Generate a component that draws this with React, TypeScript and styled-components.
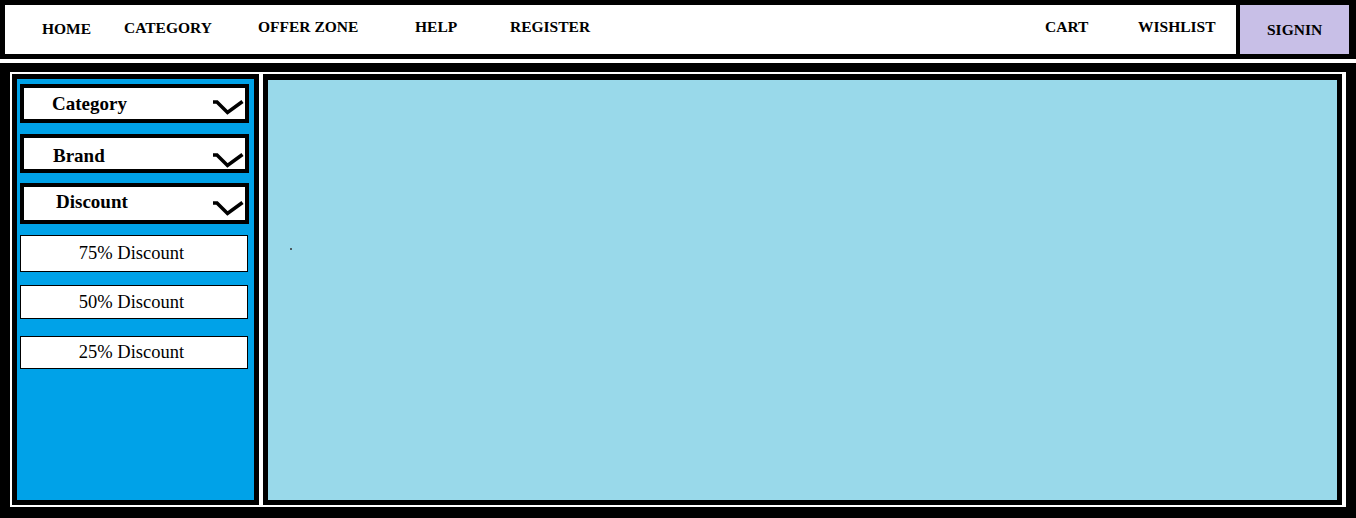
import React from "react";
import styled, { createGlobalStyle } from "styled-components";

const Global = createGlobalStyle`
  html, body { margin: 0; padding: 0; background: #ffffff; }
  body { font-family: "Liberation Serif", "Times New Roman", serif; color: #000; }
`;

const Page = styled.div`
  width: 1356px;
  height: 518px;
  display: flex;
  flex-direction: column;
  gap: 4px;
  overflow: hidden;
`;

const NavBar = styled.nav`
  box-sizing: border-box;
  height: 59px;
  border-style: solid;
  border-color: #000;
  border-width: 5px 7px 5px 5px;
  background: #fff;
  display: flex;
  align-items: stretch;
  padding-left: 37px;
`;

const NavItem = styled.a<{ $w?: number; $top: number; $grow?: boolean }>`
  box-sizing: border-box;
  ${(p) => (p.$grow ? "flex: 1;" : `width: ${p.$w}px; flex: none;`)}
  padding-top: ${(p) => p.$top}px;
  font-family: "Liberation Serif", "Times New Roman", serif;
  font-weight: bold;
  font-size: 15.5px;
  color: #000;
  text-decoration: none;
  white-space: nowrap;
`;

const SignIn = styled.a`
  box-sizing: border-box;
  width: 113px;
  flex: none;
  border-left: 4px solid #000;
  background: #c8bfe7;
  padding: 16px 0 0 27px;
  font-family: "Liberation Serif", "Times New Roman", serif;
  font-weight: bold;
  font-size: 15.5px;
  color: #000;
  text-decoration: none;
`;

const Main = styled.main`
  box-sizing: border-box;
  flex: 1;
  display: flex;
  gap: 4px;
  background: #fff;
  border-style: solid;
  border-color: #000;
  border-width: 9px 10px 11px 10px;
  padding: 2px 4px 2px 2px;
`;

const Sidebar = styled.aside`
  box-sizing: border-box;
  width: 247px;
  flex: none;
  border: 5px solid #000;
  background: #00a2e8;
  padding: 5px 0 0 3px;
  display: flex;
  flex-direction: column;
`;

const FilterHead = styled.div<{ $h: number; $gap: number }>`
  box-sizing: border-box;
  width: 229px;
  height: ${(p) => p.$h}px;
  margin-bottom: ${(p) => p.$gap}px;
  border: 4px solid #000;
  background: #fff;
  display: flex;
  align-items: flex-start;
  justify-content: space-between;
`;

const FilterLabel = styled.span<{ $indent: number; $top: number }>`
  padding: ${(p) => p.$top}px 0 0 ${(p) => p.$indent}px;
  font-family: "Liberation Serif", "Times New Roman", serif;
  font-weight: bold;
  font-size: 19px;
  line-height: normal;
`;

const Chevron = styled.svg<{ $top: number }>`
  margin: ${(p) => p.$top}px 1px 0 0;
  flex: none;
`;

const DiscountItem = styled.button<{ $h: number; $gap: number }>`
  box-sizing: border-box;
  width: 228px;
  height: ${(p) => p.$h}px;
  margin-bottom: ${(p) => p.$gap}px;
  border: 1px solid #000;
  background: #fff;
  padding: 0 5px 0 0;
  display: flex;
  align-items: center;
  justify-content: center;
  font-family: "Liberation Serif", "Times New Roman", serif;
  font-size: 18.5px;
  color: #000;
`;

const Content = styled.section`
  box-sizing: border-box;
  flex: 1;
  border: 5px solid #000;
  border-top-width: 6px;
  background: #99d9ea;
`;

const Speck = styled.div`
  width: 2px;
  height: 2px;
  margin: 168px 0 0 22px;
  background: #4a5a60;
`;

const ChevronIcon = ({ top }: { top: number }) => (
  <Chevron $top={top} width="32" height="16" viewBox="0 0 32 16">
    <polyline
      points="1,3 5,3 15.5,13.5 30.5,2.5"
      fill="none"
      stroke="#000"
      strokeWidth="3.6"
      strokeLinejoin="miter"
    />
  </Chevron>
);

const filters = [
  { label: "Category", h: 39, gap: 11, indent: 28, top: 5, chev: 11 },
  { label: "Brand", h: 39, gap: 10, indent: 29, top: 7, chev: 14 },
  { label: "Discount", h: 41, gap: 11, indent: 32, top: 4, chev: 13 },
];

const discounts = [
  { label: "75% Discount", h: 37, gap: 13 },
  { label: "50% Discount", h: 34, gap: 17 },
  { label: "25% Discount", h: 33, gap: 0 },
];

export default function App() {
  return (
    <>
      <Global />
      <Page>
        <NavBar>
          <NavItem $w={82} $top={15}>HOME</NavItem>
          <NavItem $w={134} $top={14}>CATEGORY</NavItem>
          <NavItem $w={157} $top={13}>OFFER ZONE</NavItem>
          <NavItem $w={95} $top={13}>HELP</NavItem>
          <NavItem $grow $top={13}>REGISTER</NavItem>
          <NavItem $w={93} $top={13}>CART</NavItem>
          <NavItem $w={98} $top={13}>WISHLIST</NavItem>
          <SignIn>SIGNIN</SignIn>
        </NavBar>
        <Main>
          <Sidebar>
            {filters.map((f) => (
              <FilterHead key={f.label} $h={f.h} $gap={f.gap}>
                <FilterLabel $indent={f.indent} $top={f.top}>
                  {f.label}
                </FilterLabel>
                <ChevronIcon top={f.chev} />
              </FilterHead>
            ))}
            {discounts.map((d) => (
              <DiscountItem key={d.label} $h={d.h} $gap={d.gap}>
                {d.label}
              </DiscountItem>
            ))}
          </Sidebar>
          <Content>
            <Speck />
          </Content>
        </Main>
      </Page>
    </>
  );
}
